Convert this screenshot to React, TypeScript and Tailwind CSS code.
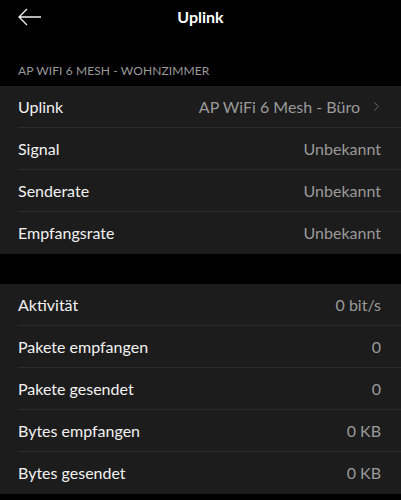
import { ChevronRight } from "lucide-react"

type Row = {
  label: string
  value: string
  link?: boolean
}

const uplinkRows: Row[] = [
  { label: "Uplink", value: "AP WiFi 6 Mesh - Büro", link: true },
  { label: "Signal", value: "Unbekannt" },
  { label: "Senderate", value: "Unbekannt" },
  { label: "Empfangsrate", value: "Unbekannt" },
]

const trafficRows: Row[] = [
  { label: "Aktivität", value: "0 bit/s" },
  { label: "Pakete empfangen", value: "0" },
  { label: "Pakete gesendet", value: "0" },
  { label: "Bytes empfangen", value: "0 KB" },
  { label: "Bytes gesendet", value: "0 KB" },
]

function Section({ rows }: { rows: Row[] }) {
  return (
    <div className="bg-[#1c1c1c]">
      {rows.map((row, i) => (
        <div key={row.label} className="pl-[18px]">
          <div
            className={
              i < rows.length - 1
                ? "flex h-[42px] items-center justify-between border-b border-[#2c2c2c] pr-[20px]"
                : "flex h-[42px] items-center justify-between pr-[20px]"
            }
          >
            <span className="text-[16px] text-[#f2f2f2]">{row.label}</span>
            <span className="flex items-center text-[16px] text-[#9a9a9a]">
              {row.value}
              {row.link ? (
                <ChevronRight
                  size={15}
                  strokeWidth={1.5}
                  className="ml-[9px] mr-[-3px] text-[#6e6e6e]"
                />
              ) : null}
            </span>
          </div>
        </div>
      ))}
    </div>
  )
}

export default function App() {
  return (
    <div
      className="h-[500px] w-[401px] overflow-hidden bg-black"
      style={{ fontFamily: "Lato, 'Noto Sans', sans-serif" }}
    >
      <header className="relative flex h-[34px] items-center justify-center">
        <svg
          className="absolute left-[17px] top-[7px]"
          width="25"
          height="20"
          viewBox="0 0 25 20"
          fill="none"
          stroke="#f2f2f2"
          strokeWidth="1.3"
        >
          <path d="M24 10H2M10 2L2 10l8 8" />
        </svg>
        <h1 className="text-[16px] font-bold text-white">Uplink</h1>
      </header>

      <div className="flex h-[52px] items-end pb-[6px] pl-[18px]">
        <span className="text-[12px] tracking-[0.1px] text-[#9a9a9a]">
          AP WIFI 6 MESH - WOHNZIMMER
        </span>
      </div>

      <Section rows={uplinkRows} />

      <div className="h-[30px]" />

      <Section rows={trafficRows} />
    </div>
  )
}
